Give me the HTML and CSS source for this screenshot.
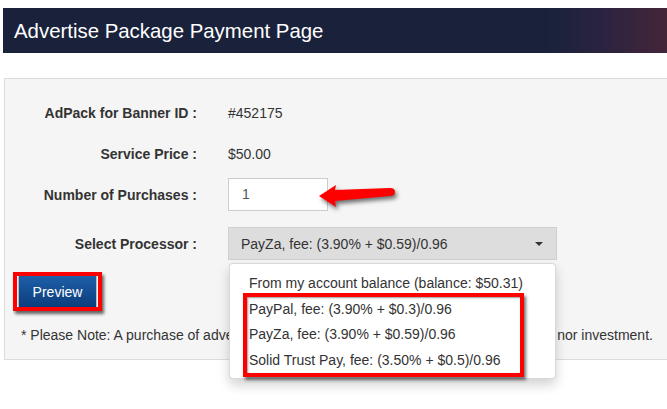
FILE: index.html
```html
<!DOCTYPE html>
<html>
<head>
<meta charset="utf-8">
<link rel="stylesheet" href="styles.css">
</head>
<body>
<div class="page">
  <header class="titlebar"><h1>Advertise Package Payment Page</h1></header>
  <section class="panel">
    <div class="row">
      <div class="label">AdPack for Banner ID :</div>
      <div class="value">#452175</div>
    </div>
    <div class="row">
      <div class="label">Service Price :</div>
      <div class="value">$50.00</div>
    </div>
    <div class="row">
      <div class="label">Number of Purchases :</div>
      <div class="value field">
        <div class="qty">1</div>
        <svg class="arrow" width="80" height="30" viewBox="0 0 80 30">
          <path d="M0,13 L17,2 L16,7 L71,5 Q76,5 76,9 Q76,13 71,13 L16,18 L17,24 Z" fill="#f00"/>
        </svg>
      </div>
    </div>
    <div class="row row-select">
      <div class="label">Select Processor :</div>
      <div class="value field">
        <div class="select"><span>PayZa, fee: (3.90% + $0.59)/0.96</span><span class="caret"></span></div>
        <ul class="dropdown">
          <li>From my account balance (balance: $50.31)</li>
          <li>PayPal, fee: (3.90% + $0.3)/0.96</li>
          <li>PayZa, fee: (3.90% + $0.59)/0.96</li>
          <li>Solid Trust Pay, fee: (3.50% + $0.5)/0.96</li>
          <li class="mark"></li>
        </ul>
      </div>
    </div>
    <div class="actions">
      <span class="btn-mark"><button class="btn">Preview</button></span>
    </div>
    <p class="note">* Please Note: A purchase of advertising package is not a deposit in any plan, security nor investment.</p>
  </section>
</div>
</body>
</html>
```
FILE: styles.css
```css
* { box-sizing: border-box; }
html, body { margin: 0; padding: 0; background: #fff; }
body { font-family: "Liberation Sans", Arial, sans-serif; color: #333; font-size: 14px; }
.page { padding: 8px 0 0 3px; width: 667px; overflow: hidden; height: 409px; }
.titlebar {
  height: 45px;
  background: linear-gradient(to right, #1a223b 0%, #1a223b 82%, #2a2340 90%, #442538 100%);
  display: flex; align-items: center;
  padding: 2px 0 0 11px;
}
.titlebar h1 { margin: 0; font-size: 20.4px; font-weight: normal; color: #fff; }
.panel {
  margin-top: 25px;
  margin-left: 1px;
  margin-right: -4px;
  background: #f5f5f5;
  border: 1px solid #dcdcdc;
  padding: 17px 0 14px 0;
}
.row {
  display: grid;
  grid-template-columns: 192px 1fr;
  column-gap: 31px;
  align-items: center;
  height: 33px;
  margin-bottom: 8px;
}
.row-select { margin-top: 16px; margin-bottom: 0; }
.label { text-align: right; font-weight: bold; color: #333; }
.value { color: #333; }
.field { position: relative; }
.qty {
  width: 100px; height: 33px;
  background: #fff; border: 1px solid #ccc;
  padding-left: 13px; line-height: 31px; color: #555;
}
.arrow {
  position: absolute; left: 91px; top: 5px;
  filter: drop-shadow(2px 3px 2px rgba(0,0,0,0.55));
}
.select {
  width: 329px; height: 33px;
  background: #ddd; border: 1px solid #d0d0d0;
  display: flex; align-items: center; justify-content: space-between;
  padding: 0 13px 0 12px; color: #333;
}
.caret {
  width: 0; height: 0;
  border-left: 4px solid transparent; border-right: 4px solid transparent;
  border-top: 4px solid #333;
}
.dropdown {
  position: absolute; left: 1px; top: 36px;
  width: 327px; margin: 0; padding: 7px 0 5px 0;
  list-style: none;
  background: #fff;
  border: 1px solid rgba(0,0,0,0.15);
  border-radius: 4px;
  box-shadow: 0 6px 12px rgba(0,0,0,0.175);
  z-index: 5;
}
.dropdown li { height: 25.5px; line-height: 25px; padding-left: 19px; color: #333; white-space: nowrap; }
.dropdown li.mark {
  position: absolute; left: 13px; top: 29px;
  width: 281px; height: 84px; padding: 0;
  border: 4px solid #f00;
  box-shadow: 2px 3px 3px rgba(0,0,0,0.55), inset 1px 1px 2px rgba(0,0,0,0.4);
}
.actions { margin-top: 12px; padding-left: 8px; height: 39px; }
.btn-mark {
  display: inline-block;
  border: 4px solid #f00;
  box-shadow: 2px 3px 3px rgba(0,0,0,0.6);
  padding: 0 1px;
}
.btn {
  display: block;
  width: 79px; height: 31px;
  border: 0; border-left: 1px solid #bbb; border-right: 1px solid #bbb;
  background: linear-gradient(to bottom, #1e5fa8, #0c3d7d);
  color: #fff; font-family: "Liberation Sans", Arial, sans-serif; font-size: 14px;
  padding: 0;
}
.note { margin: 14px 0 0 16px; line-height: 20px; white-space: nowrap; }
```
